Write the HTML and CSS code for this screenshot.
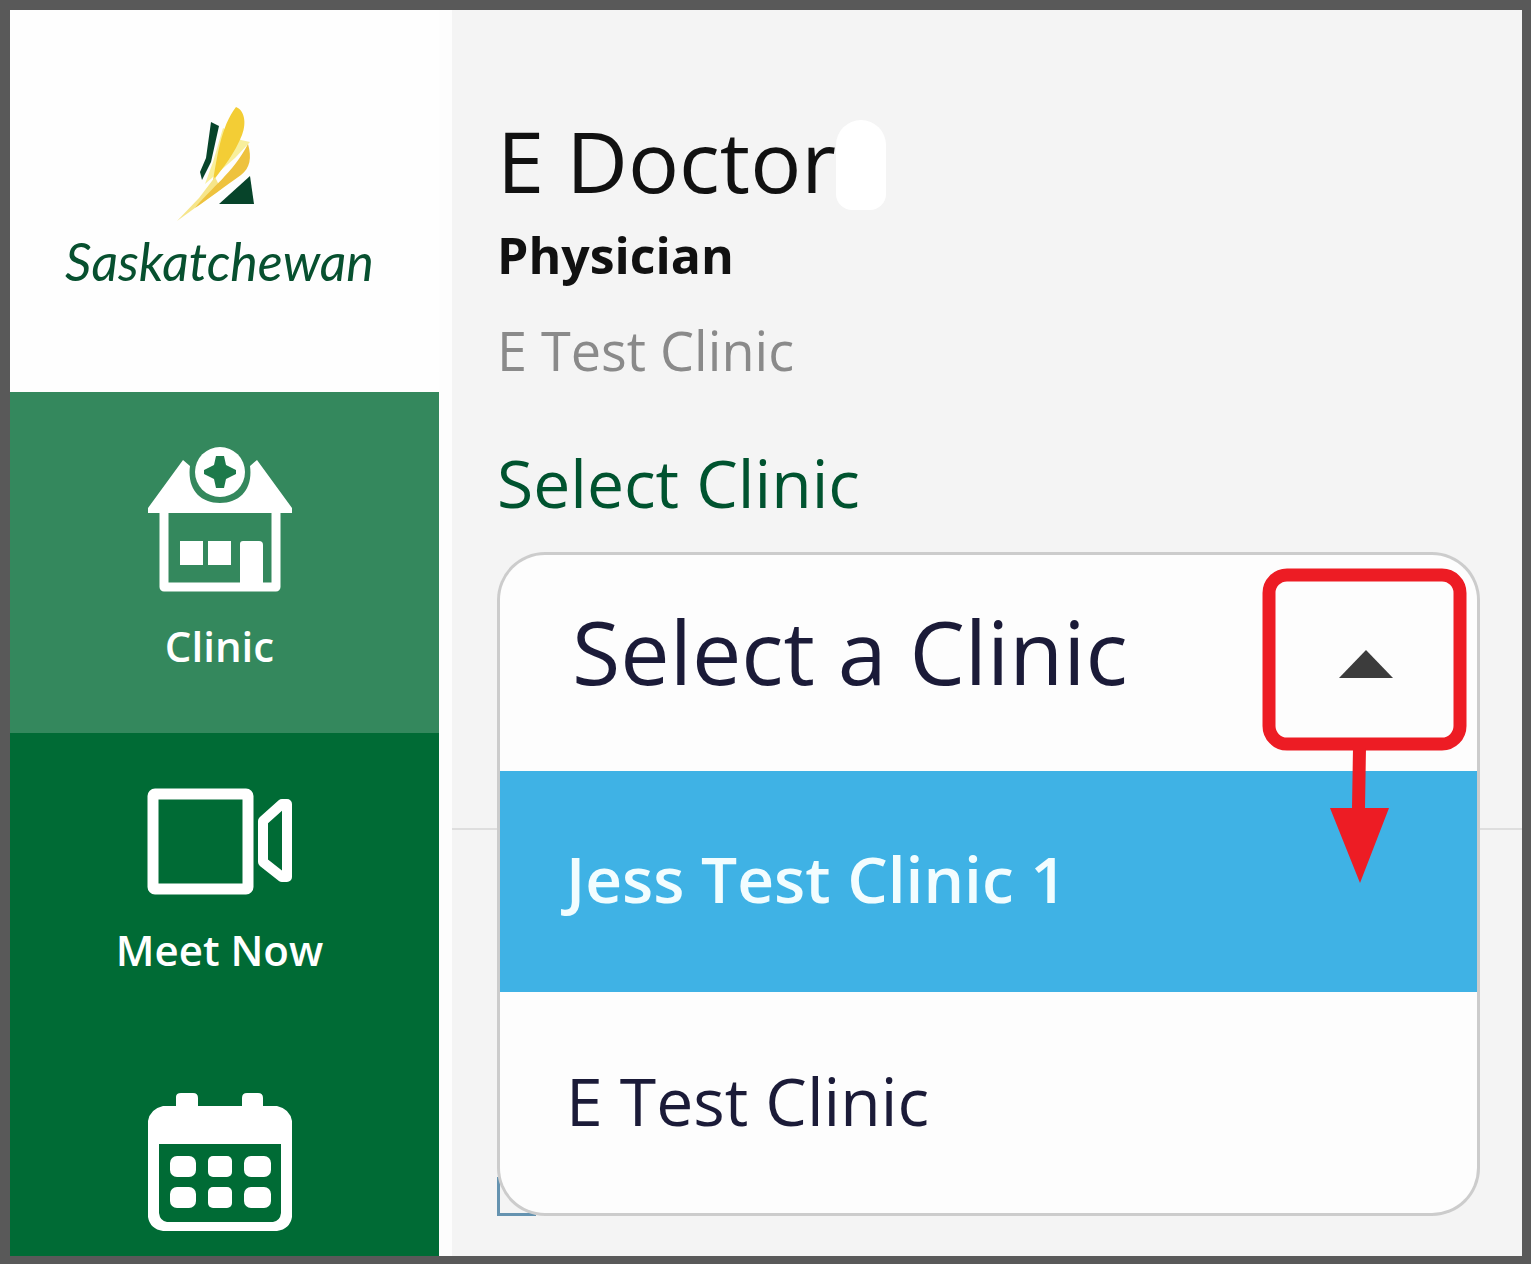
FILE: index.html
```html
<!DOCTYPE html>
<html lang="en">
<head>
    <meta charset="UTF-8">
    <meta name="viewport" content="width=device-width, initial-scale=1.0">
    <title>Select Clinic</title>
    <link rel="stylesheet" href="styles.css">
</head>
<body>
    <!-- Sidebar -->
    <aside class="sidebar">
        <div class="logo">
            <svg class="logo-mark" width="90" height="126" viewBox="0 0 90 126" aria-hidden="true">
                <path fill="#07442a" d="M36 22 L44 26 L36 62 L27 80 L25 72 L31 58 Z"/>
                <path fill="#07442a" d="M75 76 L79 104 L44 104 Z"/>
                <path fill="#f8ef9c" d="M48 28 L38 62 L30 84 L60 58 L75 42 L66 40 Z"/>
                <path fill="#f3cd35" d="M61 7 C69 10 72 22 67 35 C60 53 48 68 38 81 C42 58 46 26 61 7 Z"/>
                <path fill="#f6e58a" d="M40 77 L24 98 L2 121 L46 89 Z"/>
                <path fill="#eec23e" d="M73 44 C77 58 75 68 66 75 C49 87 35 98 20 108 C36 88 58 73 73 44 Z"/>
            </svg>
            <span class="logo-name">Saskatchewan</span>
        </div>

        <nav class="menu">
            <a href="#" class="menu-item active">
                <svg width="146" height="147" viewBox="0 0 146 147" aria-hidden="true">
                    <path fill="#fff" d="M36 14 L1 62 V67 H145 V62 L110 14 L103 20 C106 42 94 57 73 57 C52 57 40 42 43 20 Z"/>
                    <path fill="none" stroke="#fff" stroke-width="9" stroke-linejoin="round" d="M17 64 V141 H129 V64"/>
                    <circle cx="73" cy="26" r="25" fill="#fff"/>
                    <path fill="#1d7a4b" d="M69 10 H77 L79 19 L89 24 V28 L79 33 L77 42 H69 L67 33 L57 28 V24 L67 19 Z"/>
                    <rect x="33" y="95" width="23" height="24" fill="#fff"/>
                    <rect x="61" y="95" width="23" height="24" fill="#fff"/>
                    <path fill="#fff" d="M93 142 V98 Q93 95 96 95 H112 Q116 95 116 99 V142 Z"/>
                </svg>
                <span>Clinic</span>
            </a>
            <a href="#" class="menu-item">
                <svg width="146" height="110" viewBox="0 0 146 110" aria-hidden="true">
                    <g fill="none" stroke="#fff" stroke-width="11" stroke-linejoin="round">
                        <rect x="6" y="7" width="95" height="95" rx="2"/>
                        <path stroke-width="10" d="M140 17 V90 H135 L116 75 V34 L135 17 Z"/>
                    </g>
                </svg>
                <span>Meet Now</span>
            </a>
            <a href="#" class="menu-item">
                <svg width="146" height="142" viewBox="0 0 146 142" aria-hidden="true">
                    <path fill="#fff" fill-rule="evenodd" d="M16 15 H29 V6 Q29 2 34 2 H46 Q51 2 51 7 V15 H95 V7 Q95 2 100 2 H111 Q116 2 116 7 V15 H130 Q143 18 145 30 V126 Q143 138 130 140 H16 Q3 138 1 126 V30 Q3 18 16 15 Z M12 53 V122 Q13 130 20 131 H126 Q133 130 134 122 V53 Z"/>
                    <g fill="#fff">
                        <rect x="23" y="65" width="26" height="21" rx="7"/>
                        <rect x="61" y="65" width="24" height="21" rx="5"/>
                        <rect x="97" y="65" width="27" height="21" rx="7"/>
                        <rect x="23" y="96" width="26" height="21" rx="7"/>
                        <rect x="61" y="96" width="24" height="21" rx="5"/>
                        <rect x="97" y="96" width="27" height="21" rx="7"/>
                    </g>
                </svg>
            </a>
        </nav>
    </aside>

    <!-- User and clinic selection -->
    <main class="content">
        <section class="profile">
            <h1>E Doctor</h1>
            <p class="role">Physician</p>
            <p class="clinic-name">E Test Clinic</p>

            <label for="clinic">Select Clinic</label>
            <div class="dropdown">
                <select id="clinic" name="clinic">
                    <option>Select a Clinic</option>
                </select>
                <svg class="arrow-up" width="54" height="28" viewBox="0 0 54 28" aria-hidden="true">
                    <path fill="#3c3c3c" d="M27 0 L54 28 H0 Z"/>
                </svg>

                <div class="options">
                    <ul>
                        <li><button type="button" class="selected">Jess Test Clinic 1</button></li>
                        <li><button type="button">E Test Clinic</button></li>
                    </ul>
                </div>

                <svg class="callout" width="205" height="316" viewBox="0 0 205 316" aria-hidden="true">
                    <rect x="7" y="7" width="191" height="169" rx="18" fill="none" stroke="#ed1c24" stroke-width="13"/>
                    <path fill="#ed1c24" d="M91 180 H104 L103 240 H127 L98 315 L68 240 H90 Z"/>
                </svg>
            </div>
        </section>
    </main>
</body>
</html>
```
FILE: styles.css
```css
* {
    box-sizing: border-box;
}

body {
    margin: 0;
    height: 100vh;
    display: flex;
    overflow: hidden;
    border: solid #595959;
    border-width: 10px 9px 8px 10px;
    font-family: "Open Sans", "Noto Sans", sans-serif;
    background-color: #f4f4f4;
}

/* Sidebar */
.sidebar {
    width: 429px;
    flex-shrink: 0;
    overflow: hidden;
    background-color: #006b35;
}

.logo {
    height: 382px;
    padding: 90px 10px 0 0;
    display: flex;
    flex-direction: column;
    align-items: center;
    background-color: #fefefe;
}

.logo-name {
    font-family: Lato, "Open Sans", sans-serif;
    font-size: 52px;
    line-height: 70px;
    font-style: italic;
    color: #07502f;
}

.menu-item {
    display: flex;
    flex-direction: column;
    align-items: center;
    gap: 28px;
    padding: 54px 10px 62px 0;
    color: #fff;
    font-size: 42px;
    font-weight: 600;
    line-height: 50px;
    text-decoration: none;
}

.menu-item.active {
    background-color: #34885d;
}

/* Main content */
.content {
    flex: 1;
    min-width: 0;
    border-left: 13px solid #fdfdfd;
}

.profile {
    padding: 100px 42px 57px 45px;
    border-bottom: 2px solid #dedede;
}

h1 {
    display: flex;
    align-items: flex-end;
    margin: 0 0 10px;
    font-size: 85px;
    font-weight: 400;
    line-height: 100px;
    color: #111;
}

/* White patch after the name */
h1::after {
    content: "";
    width: 50px;
    height: 90px;
    border-radius: 25px 25px 16px 16px;
    background-color: #fff;
}

.role,
.clinic-name {
    margin: 0;
    line-height: 70px;
}

.role {
    font-size: 50px;
    font-weight: 700;
    color: #111;
}

.clinic-name {
    margin-top: 25px;
    font-size: 54px;
    color: #8a8a8a;
}

label {
    display: block;
    margin: 57px 0 30px;
    font-size: 66px;
    line-height: 80px;
    color: #00532f;
}

/* Clinic dropdown */
.dropdown {
    position: relative;
}

select {
    display: block;
    width: 100%;
    height: 219px;
    padding: 0 220px 24px 72px;
    appearance: none;
    border: 3px solid #ccc;
    border-bottom: 0;
    border-radius: 48px 48px 0 0;
    background-color: #fdfdfd;
    font-family: inherit;
    font-size: 88px;
    color: #1b1b38;
}

.arrow-up {
    position: absolute;
    top: 98px;
    right: 87px;
}

.options {
    position: absolute;
    top: 100%;
    left: 0;
    right: 0;
}

/* Corner of the focused field behind the list */
.options::before {
    content: "";
    position: absolute;
    left: 0;
    bottom: 0;
    width: 36px;
    height: 36px;
    border: solid #6593b0;
    border-width: 0 0 3px 3px;
}

.options ul {
    position: relative;
    margin: 0;
    padding: 0;
    list-style: none;
    overflow: hidden;
    border: 3px solid #ccc;
    border-top: 0;
    border-radius: 0 0 48px 48px;
    background-color: #fdfdfd;
}

.options button {
    display: block;
    width: 100%;
    height: 221px;
    padding: 0 66px 6px;
    border: 0;
    background-color: transparent;
    font-family: inherit;
    font-size: 66px;
    text-align: left;
    color: #1b1b38;
}

.options button.selected {
    font-size: 64px;
    font-weight: 600;
    color: #f2fdff;
    background-color: #3fb2e5;
}

/* Red marker over the arrow */
.callout {
    position: absolute;
    top: 16px;
    right: 13px;
}
```
